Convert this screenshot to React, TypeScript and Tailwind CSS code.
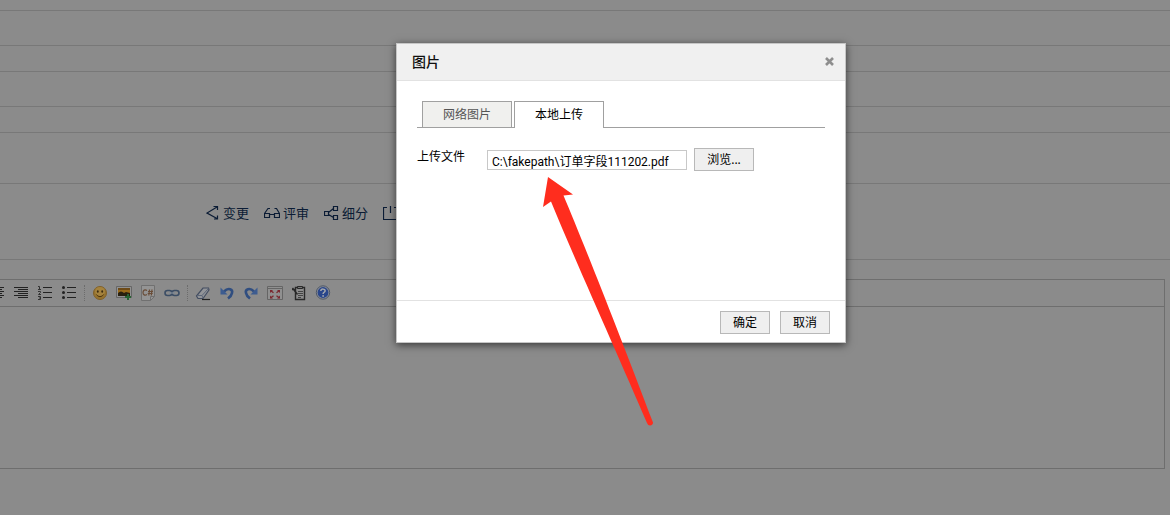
import type { ReactNode } from 'react';

interface ToolProps {
  label: string;
  children: ReactNode;
}

const Tool = ({ label, children }: ToolProps) => (
  <button type="button" aria-label={label} className="flex h-6 w-6 shrink-0 items-center justify-center">
    <svg width="16" height="16" viewBox="0 0 16 16" fill="none" aria-hidden="true">
      {children}
    </svg>
  </button>
);

const Separator = () => (
  <div className="flex w-[7px] shrink-0 justify-center">
    <div className="h-4 border-l border-dotted border-[#6c6c6c]" />
  </div>
);

const Toolbar = () => (
  <div className="-ml-[15px] flex h-[27px] items-center border-b border-[#6e6e6e]">
    <Tool label="居中">
      <path d="M1 2.5h14M3 4.5h10M1 6.5h14M3 8.5h10M1 10.5h14M3 12.5h10" stroke="#222" />
    </Tool>
    <Tool label="右对齐">
      <path d="M1 2.5h14M5 4.5h10M1 6.5h14M5 8.5h10M1 10.5h14M5 12.5h10" stroke="#222" />
    </Tool>
    <Tool label="编号">
      <path d="M6 2.5h9M6 7.5h9M6 12.5h9" stroke="#222" />
      <path d="M1 1.5h1.5v3M1 4.5h3M1 6.5h2.5v1L1.500 9.500H4M1 11.5h2.5v3H1M2 13h1.5" stroke="#333" />
    </Tool>
    <Tool label="项目符号">
      <path d="M6 2.5h9M6 7.5h9M6 12.5h9" stroke="#222" />
      <circle cx="2.5" cy="2.5" r="1.5" fill="#222" />
      <circle cx="2.5" cy="7.5" r="1.5" fill="#222" />
      <circle cx="2.5" cy="12.5" r="1.5" fill="#222" />
    </Tool>
    <Separator />
    <Tool label="插入表情">
      <circle cx="8" cy="8" r="6.5" fill="#95722d" stroke="#80602a" />
      <ellipse cx="8" cy="6.5" rx="5" ry="4.5" fill="#a4823d" />
      <ellipse cx="5.8" cy="6.5" rx="0.9" ry="1.3" fill="#3a2a10" />
      <ellipse cx="10.2" cy="6.5" rx="0.9" ry="1.3" fill="#3a2a10" />
      <path d="M4.5 9.5c1.6 2.8 5.4 2.8 7 0" stroke="#4c3410" />
    </Tool>
    <Tool label="图片">
      <path d="M.5 1.5h15v11H.5z" fill="#929292" stroke="#666" />
      <path d="M2 3h12v8H2z" fill="#9a6a18" />
      <path d="M2 3h12v2H2z" fill="#6e4b18" />
      <path d="M2 8c2-2 4-2 6 0l2-1 4 1v3H2z" fill="#29200f" />
      <path d="M12 9v6M9 12h6" stroke="#276332" strokeWidth="2" />
    </Tool>
    <Tool label="插入程序代码">
      <path d="M1.5.5h13v11l-4 4h-9z" fill="#949494" stroke="#707070" />
      <path d="M10.5 15.5v-4h4" stroke="#707070" />
      <path
        d="M7 5.5C4.8 4 3 5.3 3 7.5s1.8 3.5 4 2M9.5 4.5l-.7 6M12 4.5l-.7 6M8 6.5h5M7.7 8.5h5"
        stroke="#694c37"
        strokeWidth="1.2"
      />
    </Tool>
    <Tool label="超级链接">
      <rect x="1" y="5.5" width="7" height="5" rx="2.5" stroke="#3b4d65" strokeWidth="1.6" />
      <rect x="8" y="5.5" width="7" height="5" rx="2.5" stroke="#3b4d65" strokeWidth="1.6" />
      <path d="M5 8h6" stroke="#7b8794" strokeWidth="1.4" />
    </Tool>
    <Separator />
    <Tool label="删除格式">
      <path d="M1.5 11 8 3h5.5l.5 2-6 8.5H3z" fill="#929498" stroke="#434d60" strokeWidth="1.2" />
      <path d="M2 10.5h5l6.5-7M7 10.5l1 2.5" stroke="#5c6678" />
      <path d="M7 14.5h8" stroke="#222" strokeWidth="1.2" />
    </Tool>
    <Tool label="后退">
      <path d="M5 6.5c4.5-4.5 9-2 8 1.5-.4 2.4-2 4-4 5.5" stroke="#304e80" strokeWidth="2.6" />
      <path d="M1.5 2.5v7h7z" fill="#3d5c90" />
    </Tool>
    <Tool label="前进">
      <path d="M11 6.5c-4.5-4.5-9-2-8 1.5.4 2.4 2 4 4 5.5" stroke="#304e80" strokeWidth="2.6" />
      <path d="M14.5 2.5v7h-7z" fill="#3d5c90" />
    </Tool>
    <Tool label="全屏显示">
      <path d="M.5 1.5h15v13H.5z" fill="#909090" stroke="#656565" />
      <path d="M1 3.5h14" stroke="#656565" />
      <path d="m3.5 5.5 3 2.2M12.5 5.5l-3 2.2M3.5 13l3-2.2M12.5 13l-3-2.2" stroke="#7b2930" strokeWidth="1.4" />
      <path d="M3 5h3L3 8zM13 5h-3l3 3zM3 13.5h3l-3-3zM13 13.5h-3l3-3z" fill="#7b2930" />
    </Tool>
    <Tool label="从剪贴板粘贴">
      <path d="M4.5 2.5h9v12h-9z" fill="#8d8d8d" stroke="#292929" strokeWidth="1.4" />
      <path d="M6.5 1.5h5v2h-5z" fill="#777" stroke="#292929" />
      <path d="M7 6.5h5M7 8.5h5M7 10.5h5M7 12.5h3" stroke="#444" />
      <path d="m1.5 3 5 6.5M1 4.5h3" stroke="#292929" strokeWidth="1.4" />
    </Tool>
    <Tool label="帮助">
      <circle cx="8" cy="7.5" r="6.7" fill="#8b8f98" stroke="#505968" />
      <circle cx="8" cy="7.5" r="5.4" fill="#29468b" />
      <path d="M5.8 6c.2-2.6 4.6-2.4 4.3 0-.2 1.3-2 1.4-2 3" stroke="#a5a8ae" strokeWidth="1.5" />
      <circle cx="8.1" cy="11" r="0.9" fill="#a5a8ae" />
    </Tool>
  </div>
);

interface ActionProps {
  text?: string;
  label?: string;
  width: number;
  children: ReactNode;
}

const Action = ({ text, label, width, children }: ActionProps) => (
  <a href="#" aria-label={label} className="flex h-5 shrink-0 items-center gap-[3px] text-[13px] leading-5 text-[#0b1c35]">
    <svg
      width={width}
      height="16"
      viewBox={`0 0 ${width} 16`}
      fill="none"
      stroke="#0b1c35"
      strokeWidth="1.2"
      aria-hidden="true"
    >
      {children}
    </svg>
    {text}
  </a>
);

const Actions = () => (
  <div className="flex h-[76px] items-start gap-[15px] border-b border-[#787878] pt-[19px] pl-[206px]">
    <Action text="变更" width={14}>
      <path d="M11 2 1 8l10 5.5M7.5 1.5h4V5M11.5 10.5V14H8" />
    </Action>
    <Action text="评审" width={16}>
      <path d="M.5 8.5h5v4h-5zM10.5 8.5h5v4h-5zM5.5 9.5h5M.5 8.5 4 3.5h2M15.5 8.5 12.5 3.5h-2" />
    </Action>
    <Action text="细分" width={15}>
      <path d="M.5 6.5h4v4h-4zM9.5 1.5h4v4h-4zM9.5 10.5h4v4h-4zM4.5 7.5l5-4M4.5 9.5l5 3" />
    </Action>
    <Action label="关闭" width={15}>
      <path d="M4 2.5H.5v12h14v-12H11M7.5 1v7" />
    </Action>
  </div>
);

const buttonClass = 'h-[23px] border border-[#b8b8b8] bg-[#efefef] text-xs leading-5 text-black';

const ImageDialog = () => (
  <div
    role="dialog"
    aria-labelledby="dialog-title"
    className="absolute top-[43px] left-[396px] w-[450px] border border-[#c6c6c6] bg-white shadow-[0_2px_8px_rgba(0,0,0,0.6)]"
  >
    <div className="flex h-[37px] items-center justify-between border-b border-[#e2e2e2] bg-[#f0f0f0] pr-[11px] pl-[15px]">
      <h1 id="dialog-title" className="text-[14px] leading-5 font-medium text-[#111]">
        图片
      </h1>
      <button type="button" aria-label="关闭" className="pb-0.5">
        <svg width="9" height="9" viewBox="0 0 9 9" stroke="#8e8e8e" strokeWidth="2.6" aria-hidden="true">
          <path d="m1 1 7 7M8 1 1 8" />
        </svg>
      </button>
    </div>

    <div className="h-[219px] px-5 pt-5">
      <div role="tablist" className="flex h-[27px] gap-0.5 border-b border-[#a0a0a0] pl-[5px] text-xs">
        <button
          type="button"
          role="tab"
          aria-selected="false"
          className="h-[26px] w-[90px] border border-b-0 border-[#a0a0a0] bg-[#f0f0ee] text-[#555]"
        >
          网络图片
        </button>
        <button
          type="button"
          role="tab"
          aria-selected="true"
          className="h-[27px] w-[90px] border border-b-0 border-[#a0a0a0] bg-white text-black"
        >
          本地上传
        </button>
      </div>

      <div className="mt-5 flex items-start">
        <label htmlFor="file" className="w-[70px] text-xs leading-[18px] text-black">
          上传文件
        </label>
        <input
          id="file"
          type="text"
          readOnly
          value="C:\fakepath\订单字段111202.pdf"
          className="mt-0.5 h-5 w-[200px] border border-[#c8c8c8] bg-white px-1 font-['Roboto','Noto_Sans_CJK_SC',sans-serif] text-xs leading-4 text-black"
        />
        <button type="button" className={`ml-[7px] w-[60px] ${buttonClass}`}>
          浏览...
        </button>
      </div>
    </div>

    <div className="flex h-[42px] justify-end gap-2.5 border-t border-[#e2e2e2] pt-2.5 pr-[15px]">
      <button type="button" className={`w-[50px] ${buttonClass}`}>
        确定
      </button>
      <button type="button" className={`w-[50px] ${buttonClass}`}>
        取消
      </button>
    </div>
  </div>
);

export default function App() {
  return (
    <div className="relative min-h-screen overflow-hidden bg-[#8b8b8b] font-['Noto_Sans','Noto_Sans_CJK_SC',sans-serif]">
      <div className="h-[11px] border-b border-[#787878]" />
      <div className="h-[35px] border-b border-[#787878]" />
      <div className="h-[26px] border-b border-[#787878]" />
      <div className="h-[35px] border-b border-[#787878]" />
      <div className="h-[26px] border-b border-[#787878]" />
      <div className="h-[51px] border-b border-[#787878]" />
      <Actions />

      <div className="mt-[19px] mr-[5px] border border-l-0 border-[#6e6e6e]">
        <Toolbar />
        <textarea aria-label="备注" className="block h-[161px] w-full resize-none bg-transparent p-2 text-xs outline-none" />
      </div>

      <ImageDialog />

      {/* Pointer from the page up to the file name */}
      <svg
        className="pointer-events-none absolute top-[177px] left-[543px]"
        width="111"
        height="249"
        viewBox="0 0 111 249"
        aria-hidden="true"
      >
        <path
          d="M5 0 30 17.5 20.5 18.5C38 60 70 140 110 245.5Q110 248 107 248.5Q105 248.5 104 246C75 178 35 90 8 24.5L0 30Z"
          fill="#ff2d1e"
        />
      </svg>
    </div>
  );
}
